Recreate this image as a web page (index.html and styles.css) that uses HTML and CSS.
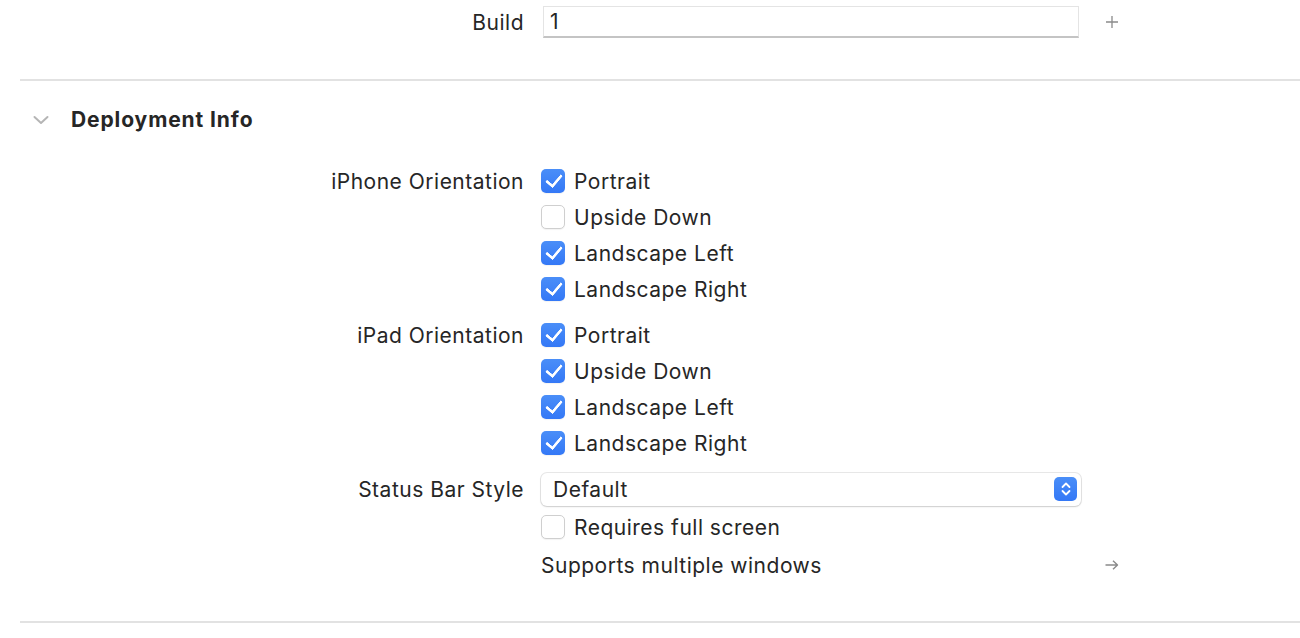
FILE: index.html
```html
<!DOCTYPE html>
<html>
<head>
<meta charset="utf-8">
<link rel="stylesheet" href="styles.css">
</head>
<body>
<div class="page">
  <div class="field build-row">
    <div class="label">Build</div>
    <div class="controls"><div class="textfield">1</div></div>
    <div class="acc">
      <svg width="14" height="14" viewBox="0 0 14 14"><path d="M7 1v12M1 7h12" stroke="#8a8a8a" stroke-width="1.3" fill="none"/></svg>
    </div>
  </div>
  <div class="sep sep-top"></div>
  <div class="section-header">
    <svg class="chev" width="16" height="10" viewBox="0 0 16 10"><path d="M1.5 2l6.5 6 6.5-6" stroke="#b5b5b5" stroke-width="2" fill="none" stroke-linecap="round" stroke-linejoin="round"/></svg>
    <span class="title">Deployment Info</span>
  </div>

  <div class="form">
    <div class="field">
      <div class="label">iPhone Orientation</div>
      <div class="controls">
        <div class="row"><span class="cb on"></span><span>Portrait</span></div>
        <div class="row"><span class="cb"></span><span>Upside Down</span></div>
        <div class="row"><span class="cb on"></span><span>Landscape Left</span></div>
        <div class="row"><span class="cb on"></span><span>Landscape Right</span></div>
      </div>
      <div class="acc"></div>
    </div>

    <div class="field group">
      <div class="label">iPad Orientation</div>
      <div class="controls">
        <div class="row"><span class="cb on"></span><span>Portrait</span></div>
        <div class="row"><span class="cb on"></span><span>Upside Down</span></div>
        <div class="row"><span class="cb on"></span><span>Landscape Left</span></div>
        <div class="row"><span class="cb on"></span><span>Landscape Right</span></div>
      </div>
      <div class="acc"></div>
    </div>

    <div class="field group">
      <div class="label">Status Bar Style</div>
      <div class="controls">
        <div class="row">
          <div class="popup">
            <span>Default</span>
            <span class="stepper">
              <svg width="12" height="16" viewBox="0 0 12 16"><path d="M2.5 6l3.5-3.5 3.5 3.5M2.5 10l3.5 3.5 3.5-3.5" stroke="#fff" stroke-width="1.8" fill="none" stroke-linecap="round" stroke-linejoin="round"/></svg>
            </span>
          </div>
        </div>
        <div class="row tight"><span class="cb"></span><span>Requires full screen</span></div>
      </div>
      <div class="acc"></div>
    </div>

    <div class="field tight">
      <div class="label"></div>
      <div class="controls">
        <div class="row"><span>Supports multiple windows</span></div>
      </div>
      <div class="acc">
        <svg width="16" height="12" viewBox="0 0 16 12"><path d="M1.5 6h12M9 1.8L13.5 6 9 10.2" stroke="#8a8a8a" stroke-width="1.4" fill="none" stroke-linejoin="round"/></svg>
      </div>
    </div>
  </div>

  <div class="sep sep-bottom"></div>
</div>
</body>
</html>
```
FILE: styles.css
```css
html, body {
  margin: 0;
  padding: 0;
  background: #ffffff;
}
body {
  font-family: Inter, "Liberation Sans", sans-serif;
  font-size: 21px;
  letter-spacing: 0.5px;
  color: #262626;
}
.page {
  width: 1300px;
}
.field {
  display: grid;
  grid-template-columns: 523px 540px 26px;
  column-gap: 18px;
  align-items: start;
}
.label {
  text-align: right;
  height: 36px;
  line-height: 37px;
  white-space: nowrap;
  margin-right: -1px;
}
.controls {
  display: flex;
  flex-direction: column;
}
.acc {
  height: 36px;
  display: flex;
  align-items: center;
  justify-content: center;
  letter-spacing: 0;
}
.row {
  height: 36px;
  display: flex;
  align-items: center;
  gap: 9px;
  white-space: nowrap;
}
.row.tight, .field.tight {
  margin-top: 2px;
}
.group {
  margin-top: 10px;
}
.build-row {
  padding-top: 4px;
}
.build-row .label, .build-row .acc {
  height: 36px;
}
.build-row .controls {
  padding-top: 2px;
}
.textfield {
  margin-left: 2px;
  width: 536px;
  height: 32px;
  box-sizing: border-box;
  border: 1px solid #e4e4e4;
  border-bottom: 2px solid #c4c4c4;
  padding-left: 6px;
  line-height: 30px;
  background: #fff;
}
.sep {
  margin-left: 20px;
  height: 2px;
  background: #e2e2e2;
}
.sep-top {
  margin-top: 39px;
}
.section-header {
  height: 76px;
  display: flex;
  align-items: center;
}
.chev {
  margin-left: 33px;
  margin-right: 22px;
  margin-top: 1px;
}
.title {
  font-weight: 700;
  font-size: 21px;
  letter-spacing: 0.9px;
  color: #262626;
}
.form {
  margin-top: 6px;
}
.cb {
  width: 24px;
  height: 24px;
  box-sizing: border-box;
  border-radius: 5px;
  border: 1px solid #cfcfcf;
  background: #fff;
  box-shadow: 0 1px 1px rgba(0,0,0,0.05);
  flex: none;
  position: relative;
}
.cb.on {
  border: none;
  background: linear-gradient(#4a8ef8, #3478f6);
}
.cb.on::after {
  content: "";
  position: absolute;
  left: 8px;
  top: 2px;
  width: 7px;
  height: 13px;
  border-right: 3px solid #fff;
  border-bottom: 3px solid #fff;
  transform: rotate(40deg);
  border-radius: 1px;
}
.popup {
  width: 540px;
  height: 33px;
  box-sizing: border-box;
  border-radius: 6px;
  background: #fff;
  box-shadow: 0 0 0 1px rgba(0,0,0,0.09), 0 1px 2px rgba(0,0,0,0.12);
  display: flex;
  align-items: center;
  justify-content: space-between;
  padding-left: 12px;
  padding-right: 4px;
}
.stepper {
  width: 23px;
  height: 24px;
  border-radius: 5px;
  background: linear-gradient(#4a8ef8, #3478f6);
  display: flex;
  align-items: center;
  justify-content: center;
}
.sep-bottom {
  margin-top: 38px;
}
```
